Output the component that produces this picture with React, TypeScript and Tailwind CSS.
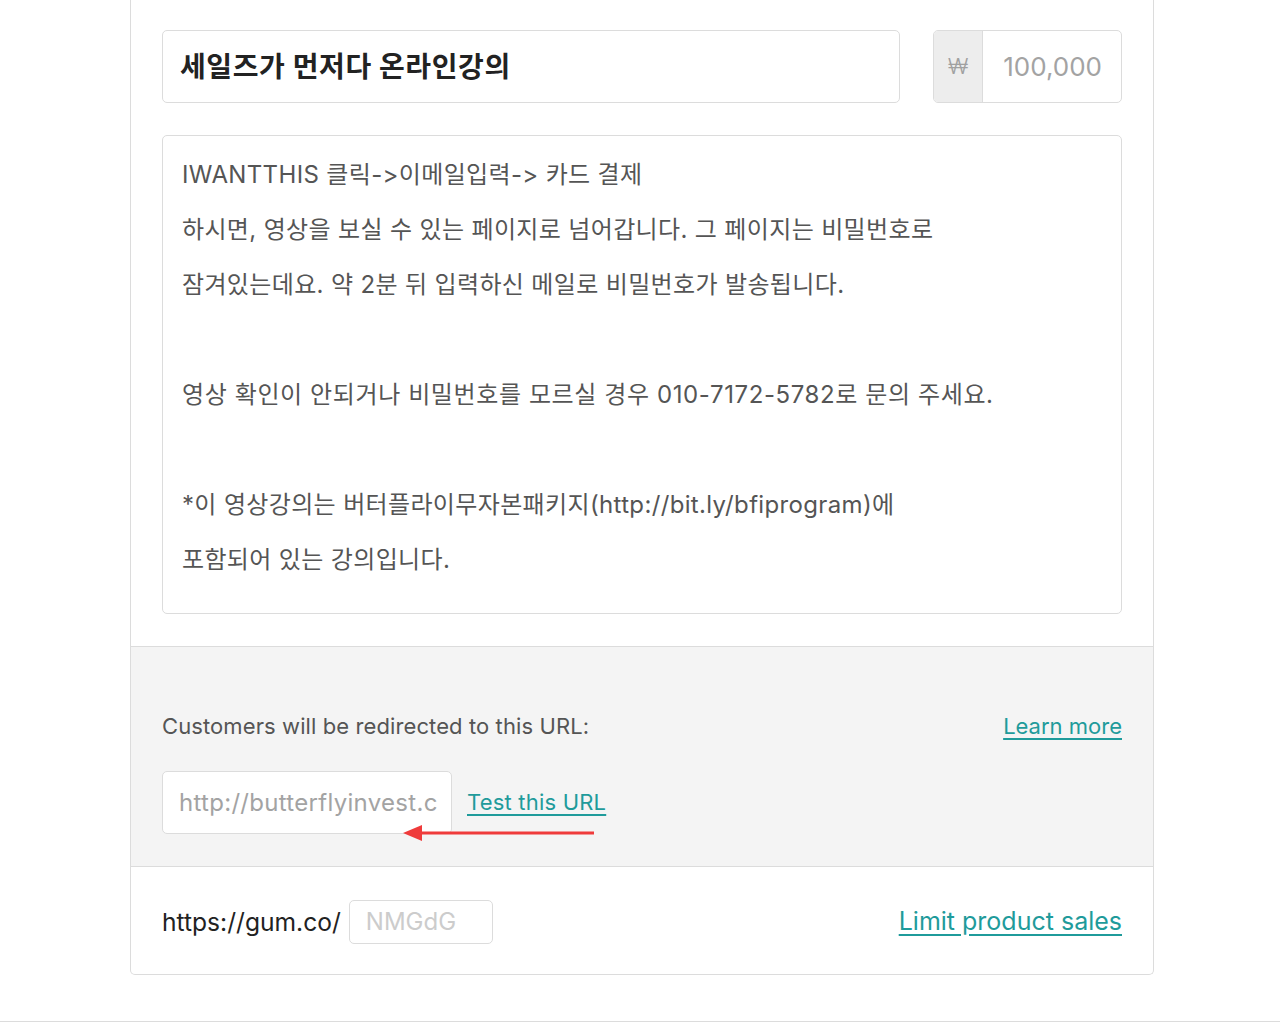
import React from "react";

const font = {
  fontFamily: '"Inter", "Noto Sans CJK KR", "Noto Sans", sans-serif',
};

export default function App() {
  return (
    <div className="w-[1280px] h-[1023px] bg-white overflow-hidden" style={font}>
      <div className="ml-[130px] w-[1024px] border-x border-b border-[#dcdcdc] rounded-b-[5px] bg-white">
        {/* Top section */}
        <div className="px-[31px] pt-[30px] pb-[32px]">
          <div className="flex gap-[33px]">
            <div className="w-[738px] h-[73px] border border-[#dcdcdc] rounded-[5px] flex items-center pl-[17px]">
              <span className="text-[28px] font-bold text-[#222] tracking-[0.6px]">세일즈가 먼저다 온라인강의</span>
            </div>
            <div className="w-[189px] h-[73px] border border-[#dcdcdc] rounded-[5px] flex overflow-hidden">
              <div className="w-[49px] bg-[#ededed] border-r border-[#dcdcdc] flex items-center justify-center text-[22px] font-light text-[#a0a0a0]">₩</div>
              <div className="flex-1 flex items-center justify-end pr-[19px] text-[26px] text-[#a3a3a3]">100,000</div>
            </div>
          </div>
          <div className="mt-[32px] h-[479px] border border-[#dcdcdc] rounded-[5px] pl-[19px] pt-[11px] text-[24px] leading-[55px] text-[#555] tracking-[0.35px] whitespace-nowrap">
            <div>IWANTTHIS 클릭-&gt;이메일입력-&gt; 카드 결제</div>
            <div>하시면, 영상을 보실 수 있는 페이지로 넘어갑니다. 그 페이지는 비밀번호로</div>
            <div>잠겨있는데요. 약 2분 뒤 입력하신 메일로 비밀번호가 발송됩니다.</div>
            <div>&nbsp;</div>
            <div className="tracking-[0.6px]">영상 확인이 안되거나 비밀번호를 모르실 경우 010-7172-5782로 문의 주세요.</div>
            <div>&nbsp;</div>
            <div>*이 영상강의는 버터플라이무자본패키지(http://bit.ly/bfiprogram)에</div>
            <div>포함되어 있는 강의입니다.</div>
          </div>
        </div>

        {/* Gray redirect section */}
        <div className="relative bg-[#f4f4f4] border-y border-[#dcdcdc] px-[31px] pt-[66px] pb-[32px]">
          <div className="flex justify-between items-center h-[26px]">
            <span className="text-[22px] text-[#555] tracking-[0.1px]">Customers will be redirected to this URL:</span>
            <a className="text-[22px] text-[#1f9b9b] underline underline-offset-[4px]">Learn more</a>
          </div>
          <div className="mt-[32px] flex items-center">
            <div className="w-[290px] h-[63px] bg-white border border-[#dcdcdc] rounded-[5px] flex items-center pl-[16px] overflow-hidden whitespace-nowrap text-[24px] tracking-[0.3px] text-[#a3a3a3]">
              http://butterflyinvest.c
            </div>
            <a className="ml-[15px] text-[22px] tracking-[0.2px] text-[#1f9b9b] underline underline-offset-[4px]">Test this URL</a>
          </div>
          <svg className="absolute left-[272px] top-[176px]" width="194" height="20" viewBox="0 0 194 20">
            <line x1="16" y1="10" x2="191" y2="10" stroke="#ef3b3b" strokeWidth="3" />
            <polygon points="0,10 19,2 19,18" fill="#ef3b3b" />
          </svg>
        </div>

        {/* Bottom section */}
        <div className="h-[107px] px-[31px] pt-[3px] flex items-center justify-between">
          <div className="flex items-center">
            <span className="text-[24.6px] text-[#222]">https://gum.co/</span>
            <div className="ml-[8px] w-[144px] h-[44px] border border-[#dcdcdc] rounded-[5px] flex items-center pl-[16px] text-[24px] text-[#cccccc]">NMGdG</div>
          </div>
          <a className="text-[25px] text-[#1f9b9b] underline underline-offset-[4px]">Limit product sales</a>
        </div>
      </div>
      <div className="mt-[46px] border-t border-[#dcdcdc]" />
    </div>
  );
}
